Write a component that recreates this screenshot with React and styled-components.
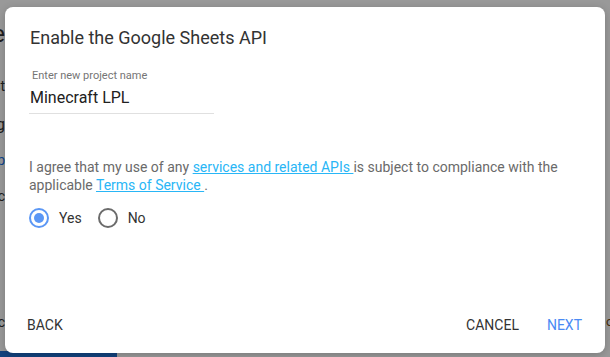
import React from "react";
import styled, { createGlobalStyle } from "styled-components";

const Global = createGlobalStyle`
  html, body { margin: 0; padding: 0; width: 610px; height: 357px; overflow: hidden; }
  body { font-family: Roboto, "Noto Sans", Arial, sans-serif; background: #fff; }
`;

const Page = styled.div`
  position: relative;
  width: 610px;
  height: 357px;
  overflow: hidden;
  display: flex;
  flex-direction: column;
  justify-content: space-between;
`;

const Behind = styled.div`
  display: flex;
  justify-content: space-between;
  flex: 1;
`;

const EdgeColumn = styled.div`
  width: 5px;
  overflow: hidden;
  display: flex;
  flex-direction: column;
  align-items: flex-end;
  padding-top: 22px;
`;

const EdgeText = styled.div`
  white-space: nowrap;
  font-size: ${(p) => p.$size}px;
  line-height: 1;
  color: ${(p) => p.$color || "#333"};
  margin-top: ${(p) => p.$gap}px;
`;

const RightEdge = styled.div`
  width: 4px;
  overflow: hidden;
  padding-top: 314px;
  font-size: 13px;
  color: #7a4a10;
`;

const BlueBar = styled.div`
  width: 117px;
  height: 6px;
  background: #1f6fd0;
`;

const Overlay = styled.div`
  position: absolute;
  inset: 0;
  background: rgba(0, 0, 0, 0.4);
  display: flex;
  padding: 7px 5px 4px 5px;
  box-sizing: border-box;
`;

const Dialog = styled.div`
  flex: 1;
  background: #fff;
  border-radius: 8px;
  display: flex;
  flex-direction: column;
  box-shadow: 0 2px 8px rgba(0, 0, 0, 0.2);
`;

const Body = styled.div`
  flex: 1;
  padding: 19px 24px 0 24px;
`;

const Title = styled.h2`
  margin: 0 0 0 1px;
  font-size: 18px;
  font-weight: 400;
  line-height: 24px;
  color: #333;
`;

const Field = styled.div`
  width: 185px;
  margin-top: 19px;
  border-bottom: 1px solid #e0e0e0;
  display: flex;
  flex-direction: column;
`;

const Label = styled.label`
  font-size: 11px;
  line-height: 14px;
  color: #757575;
  padding-left: 3px;
`;

const Value = styled.div`
  font-size: 16px;
  line-height: 22px;
  color: #212121;
  padding: 4px 0 4px 1px;
`;

const Agreement = styled.p`
  margin: 44px 0 0 0;
  font-size: 14px;
  line-height: 18px;
  color: #6a6a6a;
`;

const Link = styled.a`
  color: #29b6f6;
  text-decoration: underline;
`;

const RadioGroup = styled.div`
  display: flex;
  align-items: center;
  margin-top: 14px;
  gap: 16px;
`;

const RadioOption = styled.label`
  display: flex;
  align-items: center;
  gap: 10px;
  font-size: 14px;
  color: #333;
`;

const RadioCircle = styled.span`
  width: 16px;
  height: 16px;
  border-radius: 50%;
  border: 2px solid ${(p) => (p.$checked ? "#5b97f5" : "#6b6b6b")};
  display: flex;
  align-items: center;
  justify-content: center;
  &::after {
    content: "";
    width: 10px;
    height: 10px;
    border-radius: 50%;
    background: #5b97f5;
    display: ${(p) => (p.$checked ? "block" : "none")};
  }
`;

const Footer = styled.div`
  display: flex;
  align-items: center;
  padding: 0 15px 12px 14px;
`;

const Spacer = styled.div`
  flex: 1;
`;

const Button = styled.button`
  border: none;
  background: none;
  font-family: inherit;
  font-size: 14px;
  line-height: 20px;
  padding: 6px 8px;
  margin-left: ${(p) => p.$gap || 0}px;
  text-transform: uppercase;
  color: ${(p) => (p.$primary ? "#4a8af4" : "#333")};
  cursor: pointer;
`;

export default function App() {
  return (
    <Page>
      <Global />
      <Behind>
        <EdgeColumn>
          <EdgeText $size={24} $gap={0}>Title</EdgeText>
          <EdgeText $size={14} $gap={33}>List</EdgeText>
          <EdgeText $size={16} $gap={24}>Sig</EdgeText>
          <EdgeText $size={14} $gap={20} $color="#1a73e8">Top</EdgeText>
          <EdgeText $size={14} $gap={22}>Ac</EdgeText>
          <EdgeText $size={14} $gap={112}>Ec</EdgeText>
        </EdgeColumn>
        <RightEdge>o</RightEdge>
      </Behind>
      <BlueBar />
      <Overlay>
        <Dialog role="dialog">
          <Body>
            <Title>Enable the Google Sheets API</Title>
            <Field>
              <Label>Enter new project name</Label>
              <Value>Minecraft LPL</Value>
            </Field>
            <Agreement>
              I agree that my use of any <Link href="#">services and related APIs </Link> is subject to compliance with the
              applicable <Link href="#">Terms of Service </Link>.
            </Agreement>
            <RadioGroup>
              <RadioOption>
                <RadioCircle $checked />
                Yes
              </RadioOption>
              <RadioOption>
                <RadioCircle />
                No
              </RadioOption>
            </RadioGroup>
          </Body>
          <Footer>
            <Button>Back</Button>
            <Spacer />
            <Button>Cancel</Button>
            <Button $primary $gap={12}>Next</Button>
          </Footer>
        </Dialog>
      </Overlay>
    </Page>
  );
}
